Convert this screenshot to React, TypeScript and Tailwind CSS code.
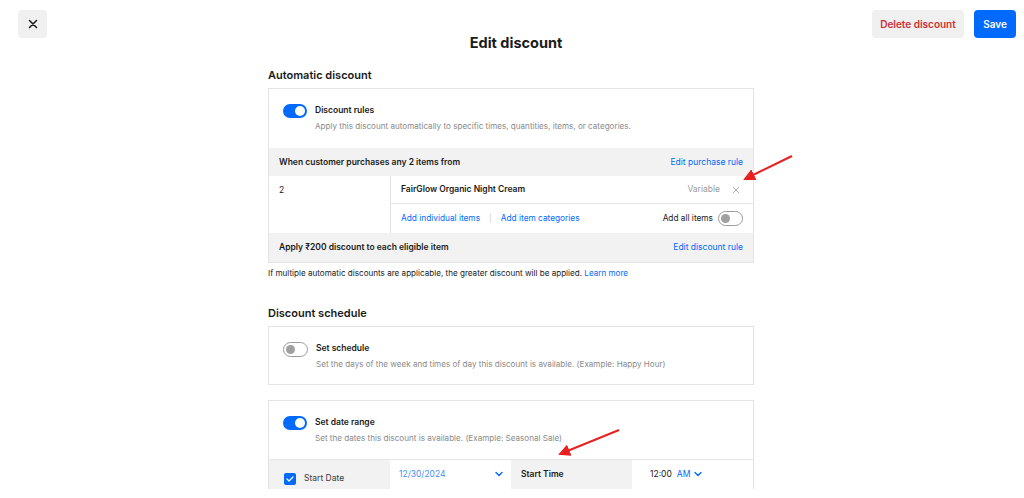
import React from "react";

const font = { fontFamily: "Inter, 'Noto Sans', sans-serif" };

function Toggle({ on }: { on: boolean }) {
  return on ? (
    <div className="w-[24px] h-[14px] rounded-full bg-[#006aff] flex items-center justify-end px-[2px] shrink-0">
      <div className="w-[10px] h-[10px] rounded-full bg-white" />
    </div>
  ) : (
    <div className="w-[25px] h-[15px] rounded-full bg-white border border-[#9a9a9a] flex items-center justify-start px-[2px] shrink-0">
      <div className="w-[9px] h-[9px] rounded-full bg-[#a0a0a0]" />
    </div>
  );
}

function Chevron() {
  return (
    <svg width="8" height="6" viewBox="0 0 8 6" className="inline-block">
      <path d="M1 1.5 L4 4.5 L7 1.5" fill="none" stroke="#006aff" strokeWidth="1.4" strokeLinecap="round" strokeLinejoin="round" />
    </svg>
  );
}

export default function App() {
  return (
    <div className="relative w-[1024px] h-[498px] overflow-hidden bg-white text-[#1a1a1a]" style={font}>
      {/* top bar */}
      <div className="flex items-start justify-between px-[18px] pt-[10px] h-[34px]">
        <button className="w-[29px] h-[28px] rounded-[4px] bg-[#f0f0f0] flex items-center justify-center">
          <svg width="10" height="10" viewBox="0 0 10 10">
            <path d="M1.5 1.5 L8.5 8.5 M8.5 1.5 L1.5 8.5" stroke="#1a1a1a" strokeWidth="1.5" strokeLinecap="round" />
          </svg>
        </button>
        <div className="flex gap-[10px] mr-[-10px]">
          <button className="h-[28px] w-[92px] rounded-[4px] bg-[#f0f0f0] text-[#d12d35] text-[10px] font-semibold">
            Delete discount
          </button>
          <button className="h-[28px] w-[42px] rounded-[4px] bg-[#006aff] text-white text-[10px] font-semibold">
            Save
          </button>
        </div>
      </div>
      <div className="text-center text-[14.5px] font-bold leading-[18px] pl-[8px]">Edit discount</div>

      <div className="w-[486px] ml-[268px]">
        <div className="mt-[15px] text-[11px] font-semibold leading-[16px]">Automatic discount</div>

        <div className="mt-[5px] border border-[#e3e3e3]">
          <div className="flex items-start gap-[8px] px-[14px] pt-[14px] pb-[14px] h-[59px]">
            <div className="mt-[1px]"><Toggle on /></div>
            <div>
              <div className="text-[8.5px] font-semibold leading-[12px] mt-[1px]">Discount rules</div>
              <div className="text-[8.1px] text-[#8a8a8a] leading-[12px] mt-[4px]">
                Apply this discount automatically to specific times, quantities, items, or categories.
              </div>
            </div>
          </div>
          <div className="bg-[#f2f2f2] h-[28px] flex items-center justify-between px-[10px] text-[8.5px]">
            <span className="font-semibold">When customer purchases any 2 items from</span>
            <span className="text-[#006aff]">Edit purchase rule</span>
          </div>
          <div className="flex h-[57px]">
            <div className="w-[122px] px-[10px] pt-[8px] text-[8.5px] border-r border-[#e3e3e3]">2</div>
            <div className="flex-1 flex flex-col">
              <div className="h-[28px] flex items-center justify-between pl-[10px] pr-[13px] border-b border-[#e8e8e8] text-[8.5px]">
                <span className="font-semibold">FairGlow Organic Night Cream</span>
                <span className="flex items-center gap-[12px]">
                  <span className="text-[#9a9a9a]">Variable</span>
                  <svg width="8" height="8" viewBox="0 0 8 8">
                    <path d="M1 1 L7 7 M7 1 L1 7" stroke="#b0b0b0" strokeWidth="1" />
                  </svg>
                </span>
              </div>
              <div className="flex-1 flex items-center justify-between pl-[10px] pr-[10px] text-[8.3px]">
                <span className="flex items-center">
                  <span className="text-[#006aff]">Add individual items</span>
                  <span className="text-[#d0d0d0] mx-[9px]">|</span>
                  <span className="text-[#006aff]">Add item categories</span>
                </span>
                <span className="flex items-center gap-[5px]">
                  <span>Add all items</span>
                  <Toggle on={false} />
                </span>
              </div>
            </div>
          </div>
          <div className="bg-[#f2f2f2] h-[29px] flex items-center justify-between px-[10px] text-[8.5px]">
            <span className="font-semibold">Apply ₹200 discount to each eligible item</span>
            <span className="text-[#006aff]">Edit discount rule</span>
          </div>
        </div>

        <div className="mt-[4px] text-[8.1px] leading-[12px]">
          If multiple automatic discounts are applicable, the greater discount will be applied.{" "}
          <span className="text-[#006aff]">Learn more</span>
        </div>

        <div className="mt-[26px] text-[11px] font-semibold leading-[16px]">Discount schedule</div>

        <div className="mt-[5px] border border-[#e3e3e3] h-[59px] flex items-start gap-[8px] px-[14px] pt-[14px]">
          <div className="mt-[1px]"><Toggle on={false} /></div>
          <div>
            <div className="text-[8.5px] font-semibold leading-[12px] mt-[1px]">Set schedule</div>
            <div className="text-[8.1px] text-[#8a8a8a] leading-[12px] mt-[4px]">
              Set the days of the week and times of day this discount is available. (Example: Happy Hour)
            </div>
          </div>
        </div>

        <div className="mt-[15px] border-t border-x border-[#e3e3e3]">
          <div className="flex items-start gap-[8px] px-[14px] pt-[14px] h-[59px] border-b border-[#e8e8e8]">
            <div className="mt-[1px]"><Toggle on /></div>
            <div>
              <div className="text-[8.5px] font-semibold leading-[12px] mt-[1px]">Set date range</div>
              <div className="text-[8.1px] text-[#8a8a8a] leading-[12px] mt-[4px]">
                Set the dates this discount is available. (Example: Seasonal Sale)
              </div>
            </div>
          </div>
          <div className="grid grid-cols-4 h-[29px] text-[8.5px]">
            <div className="bg-[#f2f2f2] flex items-center gap-[8px] pl-[15px] pt-[8px]">
              <div className="w-[12px] h-[12px] rounded-[2px] bg-[#006aff] flex items-center justify-center">
                <svg width="8" height="6" viewBox="0 0 8 6">
                  <path d="M1 3 L3 5 L7 1" fill="none" stroke="white" strokeWidth="1.3" strokeLinecap="round" strokeLinejoin="round" />
                </svg>
              </div>
              <span className="text-[#3a3a3a]">Start Date</span>
            </div>
            <div className="bg-white flex items-center justify-between pl-[9px] pr-[8px] pb-[1px]">
              <span className="text-[#4a90f0]">12/30/2024</span>
              <Chevron />
            </div>
            <div className="bg-[#f2f2f2] flex items-center pl-[10px] pb-[1px]">
              <span className="font-semibold">Start Time</span>
            </div>
            <div className="bg-white flex items-center pl-[18px] pb-[1px] gap-[5px]">
              <span>12:00</span>
              <span className="text-[#006aff] flex items-center gap-[4px]"><span>AM</span><Chevron /></span>
            </div>
          </div>
        </div>
      </div>

      {/* annotation arrows */}
      <svg className="absolute left-0 top-0 pointer-events-none" width="1024" height="498">
        <defs>
          <marker id="ah" markerWidth="6" markerHeight="6" refX="5" refY="3" orient="auto" markerUnits="strokeWidth">
            <path d="M0 0 L6 3 L0 6 Z" fill="#e8201f" />
          </marker>
        </defs>
        <line x1="792" y1="156" x2="745" y2="179" stroke="#e8201f" strokeWidth="2" markerEnd="url(#ah)" />
        <line x1="619" y1="430" x2="560" y2="454" stroke="#e8201f" strokeWidth="2" markerEnd="url(#ah)" />
      </svg>
    </div>
  );
}
